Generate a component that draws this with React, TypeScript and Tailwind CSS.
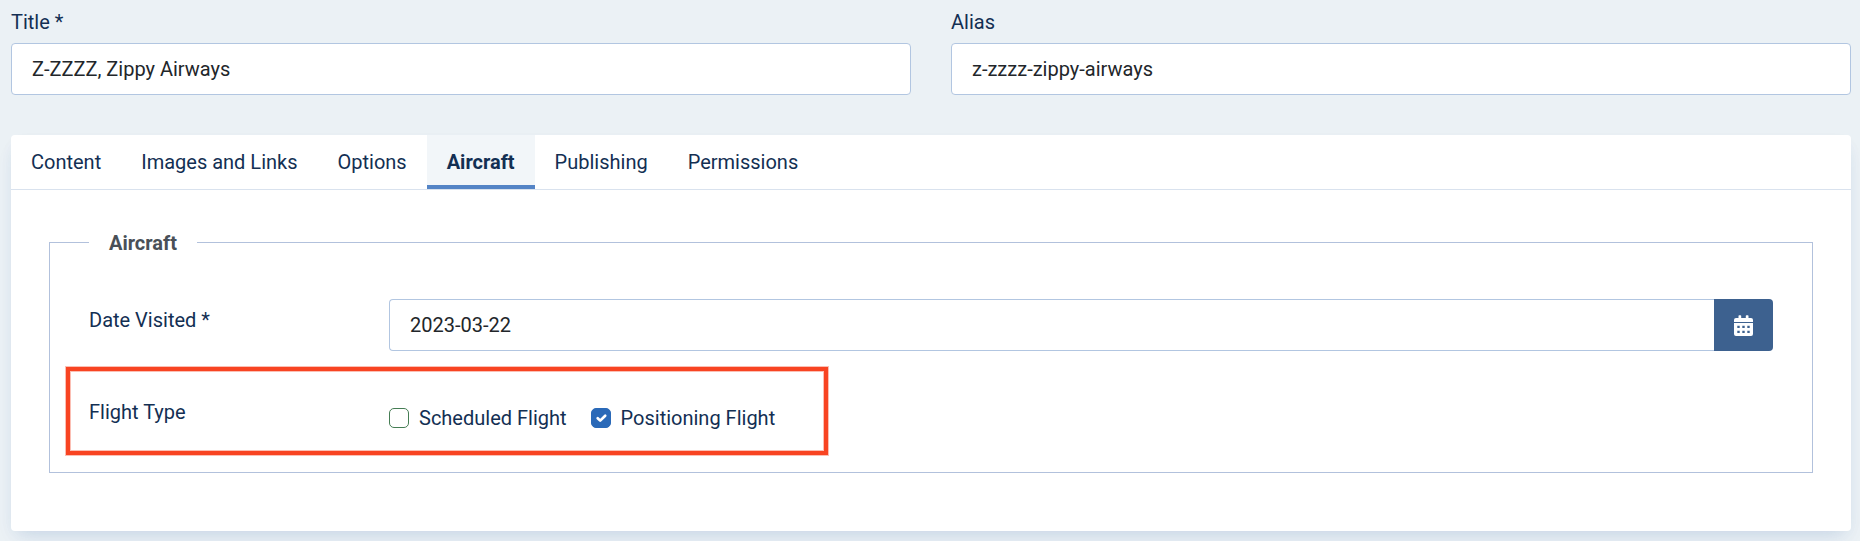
import { useState } from "react";

const tabs = ["Content", "Images and Links", "Options", "Aircraft", "Publishing", "Permissions"];

const inputStyle = "h-[52px] border border-[#b2c6e1] bg-white px-5 text-[#22262a] outline-none";

type TextFieldProps = {
    id: string;
    label: string;
    defaultValue: string;
};

function TextField({ id, label, defaultValue }: TextFieldProps) {
    return (
        <div className="flex flex-1 flex-col gap-1.5">
            <label htmlFor={id}>{label}</label>
            <input id={id} type="text" defaultValue={defaultValue} className={`${inputStyle} w-full rounded`} />
        </div>
    );
}

function CalendarIcon() {
    return (
        <svg viewBox="0 0 19 21" className="h-[21px] w-[19px]" fill="currentColor" aria-hidden="true">
            <path d="M4.5 3V1a.7.7 0 0 1 .7-.7h1.3a.7.7 0 0 1 .7.7v2h4.6V1a.7.7 0 0 1 .7-.7h1.3a.7.7 0 0 1 .7.7v2H17a2 2 0 0 1 2 2v2H0V5a2 2 0 0 1 2-2z" />
            <path fillRule="evenodd" d="M0 8h19v11a2 2 0 0 1-2 2H2a2 2 0 0 1-2-2zM3.3 10.7v2.4h2.4v-2.4zM8.3 10.7v2.4h2.4v-2.4zM13.3 10.7v2.4h2.4v-2.4zM3.3 15.7v2.4h2.4v-2.4zM8.3 15.7v2.4h2.4v-2.4zM13.3 15.7v2.4h2.4v-2.4z" />
        </svg>
    );
}

type FlightCheckboxProps = {
    id: string;
    label: string;
    checked: boolean;
    onChange: (checked: boolean) => void;
};

function FlightCheckbox({ id, label, checked, onChange }: FlightCheckboxProps) {
    return (
        <div className="flex items-center gap-2.5">
            <span className="relative flex size-5">
                <input
                    id={id}
                    type="checkbox"
                    checked={checked}
                    onChange={(e) => onChange(e.target.checked)}
                    className="size-5 appearance-none rounded-[5px] border border-[#457d54] bg-white checked:border-[#2a69b8] checked:bg-[#2a69b8]"
                />
                {checked && (
                    <svg viewBox="0 0 20 20" className="pointer-events-none absolute inset-0 size-5" fill="none" stroke="white" strokeWidth="2.7" strokeLinecap="round" strokeLinejoin="round">
                        <path d="m6.7 10.2 2.5 2.4 5-4.9" />
                    </svg>
                )}
            </span>
            <label htmlFor={id}>{label}</label>
        </div>
    );
}

export default function App() {
    const [activeTab, setActiveTab] = useState("Aircraft");
    const [scheduled, setScheduled] = useState(false);
    const [positioning, setPositioning] = useState(true);

    return (
        <div className="min-h-screen bg-[#ebf1f5] pt-[7px] pr-[9px] pb-2.5 pl-[11px] font-['Roboto',sans-serif] text-[20px] leading-[30px] text-[#132f53]">
            <div className="flex gap-10">
                <TextField id="title" label="Title *" defaultValue="Z-ZZZZ, Zippy Airways" />
                <TextField id="alias" label="Alias" defaultValue="z-zzzz-zippy-airways" />
            </div>

            <div className="mt-10 rounded bg-white shadow-[0_10px_20px_-8px_rgba(40,90,160,0.16),0_6px_16px_-4px_rgba(40,90,160,0.06)]">
                <div role="tablist" className="flex border-b border-[#d9e2ee]">
                    {tabs.map((tab) => (
                        <button
                            key={tab}
                            type="button"
                            role="tab"
                            aria-selected={tab === activeTab}
                            onClick={() => setActiveTab(tab)}
                            className={`h-[54px] border-b-4 px-5 pt-1 ${tab === activeTab ? 'border-[#5484c6] bg-[#f2f6f9] font-bold' : 'border-transparent'}`}
                        >
                            {tab}
                        </button>
                    ))}
                </div>

                <div className="px-[38px] pt-9 pb-[58px]">
                    <fieldset className="border border-[#b2c1dc] px-[39px] pb-[39px]">
                        <legend className="px-5 pt-0.5 font-bold text-[#495057]">Aircraft</legend>

                        <div className="flex flex-col gap-10 pt-[41px]">
                            <div className="flex">
                                <label htmlFor="date-visited" className="w-[300px] shrink-0 pt-1.5">Date Visited *</label>
                                <div className="flex flex-1">
                                    <input id="date-visited" type="text" defaultValue="2023-03-22" className={`${inputStyle} min-w-0 flex-1 rounded-l border-r-0`} />
                                    <button type="button" aria-label="Open the calendar" className="flex w-[59px] items-center justify-center rounded-r bg-[#3d618f] text-white">
                                        <CalendarIcon />
                                    </button>
                                </div>
                            </div>

                            <div role="group" aria-labelledby="flight-type" className="relative flex">
                                <span id="flight-type" className="w-[300px] shrink-0 pt-1.5">Flight Type</span>
                                <div className="flex gap-6 pt-3">
                                    <FlightCheckbox id="scheduled" label="Scheduled Flight" checked={scheduled} onChange={setScheduled} />
                                    <FlightCheckbox id="positioning" label="Positioning Flight" checked={positioning} onChange={setPositioning} />
                                </div>
                                {/* highlight around the flight type row */}
                                <div className="pointer-events-none absolute -top-6 -left-[23px] h-[88px] w-[762px] border-4 border-[#f84422] shadow-[0_0_0_1px_#fbbfb4,inset_0_0_0_1px_#fbbfb4]" />
                            </div>
                        </div>
                    </fieldset>
                </div>
            </div>
        </div>
    );
}
